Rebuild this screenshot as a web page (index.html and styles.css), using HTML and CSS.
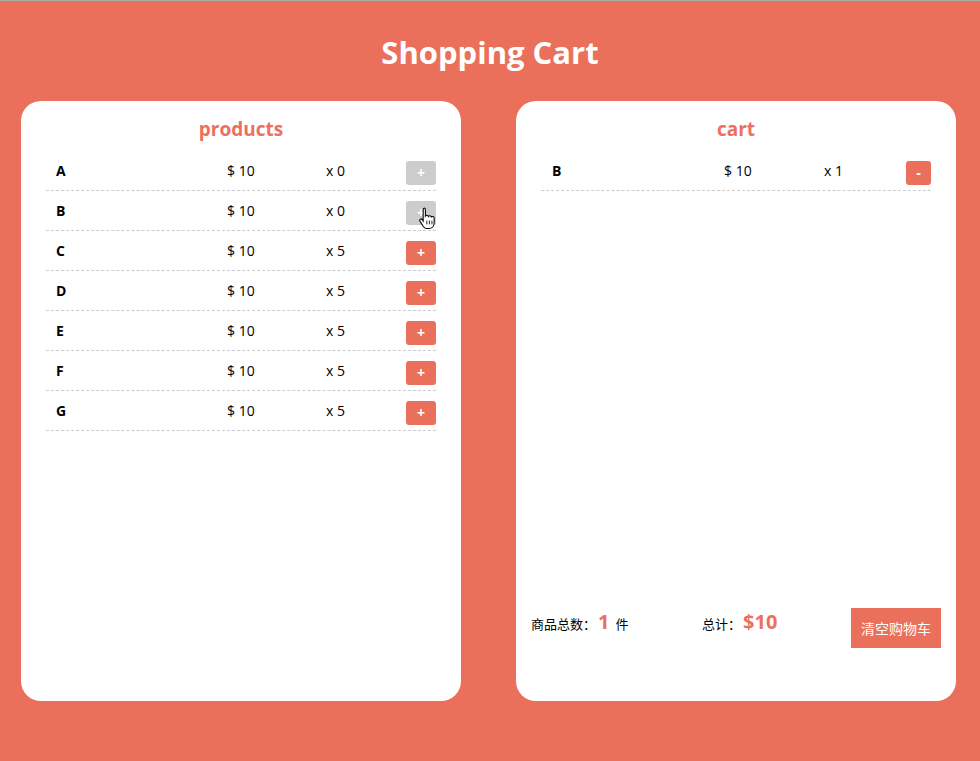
FILE: index.html
```html
<!DOCTYPE html>
<html lang="zh">
<head>
<meta charset="utf-8">
<title>Shopping Cart</title>
<link rel="stylesheet" href="styles.css">
</head>
<body>
<div class="page">
  <header class="top">
    <h1 class="title">Shopping Cart</h1>
  </header>
  <main class="panels">
    <section class="panel">
      <h2 class="panel-title">products</h2>
      <ul class="list products">
        <li class="row"><span class="name">A</span><span class="price">$ 10</span><span class="qty">x 0</span><button class="btn disabled">+</button></li>
        <li class="row"><span class="name">B</span><span class="price">$ 10</span><span class="qty">x 0</span><button class="btn disabled">+<svg class="cursor" width="19" height="24" viewBox="0 0 18 22"><path d="M5.5 1.5c.9 0 1.5.6 1.5 1.5v6.2c.3-.5.8-.8 1.4-.8.8 0 1.3.5 1.4 1.1.3-.4.8-.7 1.4-.7.8 0 1.3.5 1.4 1.2.3-.3.7-.5 1.2-.5.9 0 1.5.7 1.5 1.6v4.6c0 3-2 5.3-5 5.3H8.6c-1.6 0-2.7-.7-3.6-2L1.9 14c-.5-.7-.3-1.5.3-1.9.6-.4 1.4-.2 1.8.4l.9 1.3V3c0-.9.6-1.5 1.5-1.5z" fill="#fff" stroke="#000" stroke-width="1"/><path d="M8.4 13.5v3.5M10.8 13.5v3.5M13.2 13.5v3.5" stroke="#000" stroke-width="0.8"/></svg></button></li>
        <li class="row"><span class="name">C</span><span class="price">$ 10</span><span class="qty">x 5</span><button class="btn">+</button></li>
        <li class="row"><span class="name">D</span><span class="price">$ 10</span><span class="qty">x 5</span><button class="btn">+</button></li>
        <li class="row"><span class="name">E</span><span class="price">$ 10</span><span class="qty">x 5</span><button class="btn">+</button></li>
        <li class="row"><span class="name">F</span><span class="price">$ 10</span><span class="qty">x 5</span><button class="btn">+</button></li>
        <li class="row"><span class="name">G</span><span class="price">$ 10</span><span class="qty">x 5</span><button class="btn">+</button></li>
      </ul>
    </section>
    <section class="panel">
      <h2 class="panel-title">cart</h2>
      <ul class="list cart">
        <li class="row"><span class="name">B</span><span class="price">$ 10</span><span class="qty">x 1</span><button class="btn minus">-</button></li>
      </ul>
      <footer class="summary">
        <div class="stat">商品总数：<strong class="big count">1</strong>件</div>
        <div class="stat">总计：<strong class="big">$10</strong></div>
        <button class="clear">清空购物车</button>
      </footer>
    </section>
  </main>
</div>
</body>
</html>
```

FILE: styles.css
```css
html, body {
  margin: 0;
  padding: 0;
}
body {
  background: #eb705b;
  font-family: "Open Sans", "Noto Sans CJK SC", sans-serif;
  color: #000;
  border-top: 1px solid #aaa;
}
.page {
  width: 980px;
  height: 760px;
}
.top {
  height: 100px;
  display: flex;
  align-items: center;
  justify-content: center;
}
.title {
  margin: 0;
  color: #fff;
  font-size: 31px;
  font-weight: 700;
  line-height: 1;
  transform: translateY(1px);
}
.panels {
  display: flex;
  padding-left: 21px;
  gap: 55px;
}
.panel {
  width: 440px;
  height: 600px;
  background: #fff;
  border-radius: 20px;
  box-sizing: border-box;
  padding: 0 25px;
  display: flex;
  flex-direction: column;
}
.panel-title {
  margin: 0;
  height: 50px;
  line-height: 56px;
  text-align: center;
  color: #ee6f5e;
  font-size: 19px;
  font-weight: 700;
}
.list {
  list-style: none;
  margin: 0;
  padding: 0;
  flex: 1;
}
.row {
  height: 40px;
  border-bottom: 1px dashed #ccc;
  box-sizing: border-box;
  display: grid;
  align-items: center;
  font-size: 14px;
}
.products .row {
  grid-template-columns: 171px 99px 1fr 30px;
  padding-left: 10px;
}
.cart .row {
  grid-template-columns: 172px 100px 1fr 25px;
  padding-left: 11px;
}
.name {
  font-weight: 700;
}
.btn {
  position: relative;
  height: 24px;
  margin-top: 5px;
  border: none;
  border-radius: 3px;
  background: #eb705b;
  color: #fff;
  font-family: inherit;
  font-size: 14px;
  font-weight: 700;
  padding: 0;
  line-height: 24px;
}
.btn.disabled {
  background: #cccccc;
}
.cursor {
  position: absolute;
  left: 12px;
  top: 5px;
}
.summary {
  display: flex;
  justify-content: space-between;
  align-items: center;
  height: 40px;
  margin: 0 -10px 53px;
  font-size: 13px;
}
.stat {
  display: flex;
  align-items: baseline;
  margin-bottom: 14px;
}
.big {
  color: #ee6f5e;
  font-size: 20px;
  font-weight: 700;
  margin-left: 2px;
}
.count {
  margin-right: 6px;
}
.clear {
  width: 90px;
  height: 40px;
  border: none;
  background: #eb705b;
  color: #fff;
  font-family: inherit;
  font-size: 14px;
  padding: 0;
}
```
